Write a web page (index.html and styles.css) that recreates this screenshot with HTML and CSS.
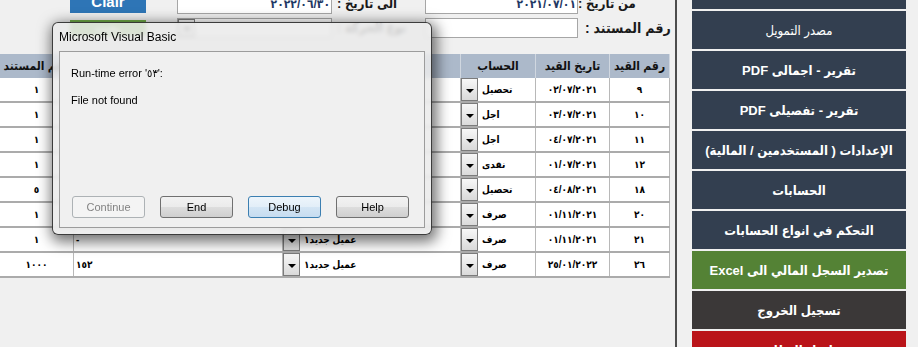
FILE: index.html
```html
<!DOCTYPE html>
<html lang="ar">
<head>
  <meta charset="UTF-8" />
  <title>السجل المالي</title>
  <link rel="stylesheet" href="styles.css">
</head>
<body>
  <div class="app">
    <main class="main">
      <div class="filters">
        <button class="btn-clear">Clair</button>
        <div class="input date field-a">٢٠٢٢/٠٦/٣٠</div>
        <div class="label label-a">الى تاريخ :</div>
        <div class="input date field-b">٢٠٢١/٠٧/٠١</div>
        <div class="label label-b">من تاريخ :</div>

        <button class="btn-search">بحث</button>
        <div class="input combo-box field-a"><span class="drop"></span></div>
        <div class="label label-a row2">نوع الحركة :</div>
        <div class="input field-b"></div>
        <div class="label label-c row2">رقم المستند :</div>
      </div>

      <div class="grid-head">
        <div class="th">رقم المستند</div>
        <div class="th">البيان</div>
        <div class="th">اسم العميل</div>
        <div class="th">الحساب</div>
        <div class="th">تاريخ القيد</div>
        <div class="th">رقم القيد</div>
      </div>
      <div id="rows"></div>

      <div class="dialog">
        <div class="dialog-title">Microsoft Visual Basic</div>
        <div class="dialog-body">
          <p class="msg">Run-time error '٥٣':</p>
          <p class="msg">File not found</p>
          <div class="dialog-buttons">
            <button class="vb-btn" disabled>Continue</button>
            <button class="vb-btn">End</button>
            <button class="vb-btn default">Debug</button>
            <button class="vb-btn">Help</button>
          </div>
        </div>
      </div>
    </main>

    <div class="divider"></div>

    <nav class="side">
      <div class="side-btn slate first">السجل المالي</div>
      <div class="side-btn slate light">مصدر التمويل</div>
      <div class="side-btn slate">تقرير - اجمالى PDF</div>
      <div class="side-btn slate">تقرير - تفصيلى PDF</div>
      <div class="side-btn slate">الإعدادات ( المستخدمين / المالية)</div>
      <div class="side-btn slate">الحسابات</div>
      <div class="side-btn slate">التحكم في انواع الحسابات</div>
      <div class="side-btn green">تصدير السجل المالي الى Excel</div>
      <div class="side-btn dark">تسجيل الخروج</div>
      <div class="side-btn red">انهاء النظام</div>
    </nav>
  </div>

  <script>
    const records = [
      ['٩', '٠٢/٠٧/٢٠٢١', 'تحصيل', '', '', '١'],
      ['١٠', '٠٣/٠٧/٢٠٢١', 'اجل', '', '', '١'],
      ['١١', '٠٤/٠٧/٢٠٢١', 'اجل', '', '', '١'],
      ['١٢', '٠١/٠٧/٢٠٢١', 'نقدى', '', '', '١'],
      ['١٨', '٠٤/٠٨/٢٠٢١', 'تحصيل', '', '', '٥'],
      ['٢٠', '٠١/١١/٢٠٢١', 'صرف', '', '', '١'],
      ['٢١', '٠١/١١/٢٠٢١', 'صرف', 'عميل جديد١', '-', '١'],
      ['٢٦', '٢٥/٠١/٢٠٢٢', 'صرف', 'عميل جديد١', '١٥٢', '١٠٠٠']
    ];

    const rows = document.getElementById('rows');
    records.forEach(function (r) {
      const row = document.createElement('div');
      row.className = 'row';
      row.innerHTML =
        '<div class="cell">' + r[5] + '</div>' +
        '<div class="cell text">' + r[4] + '</div>' +
        '<div class="cell combo"><span class="drop"></span><span class="val">' + r[3] + '</span></div>' +
        '<div class="cell combo"><span class="drop"></span><span class="val">' + r[2] + '</span></div>' +
        '<div class="cell num">' + r[1] + '</div>' +
        '<div class="cell">' + r[0] + '</div>';
      rows.appendChild(row);
    });
  </script>
</body>
</html>
```

FILE: styles.css
```css
* {
  box-sizing: border-box;
}
body {
  margin: 0;
  background-color: #f0f0f0;
  font-family: "Liberation Sans", "DejaVu Sans Condensed", "DejaVu Sans", sans-serif;
  overflow: hidden;
}
.app {
  display: flex;
  width: 918px;
  height: 347px;
  overflow: hidden;
}
.main {
  position: relative;
  width: 675px;
  flex: none;
}
.divider {
  width: 2px;
  flex: none;
  background-color: #4d4d4d;
}

/* filters */
.filters {
  display: grid;
  grid-template-columns: 70px 78px 29px 155px 93px 153px 97px;
  grid-template-rows: 24px 20px;
  row-gap: 4px;
  margin-top: -10px;
}
.btn-clear, .btn-search {
  grid-column: 2;
  width: 76px;
  border: none;
  color: white;
  font-family: "Liberation Sans", "DejaVu Sans", sans-serif;
  font-weight: bold;
  font-size: 15px;
  padding: 0;
}
.btn-clear {
  height: 23px;
  background-color: #2e75b6;
  line-height: 13px;
}
.btn-search {
  margin-top: 2px;
  height: 16px;
  background-color: #70ad47;
  font-size: 12px;
}
.input {
  background: #fff;
  border: 1px solid #a6a6a6;
}
.field-a {
  grid-column: 4;
}
.field-b {
  grid-column: 6;
}
.date {
  color: #1f3864;
  font-weight: bold;
  font-size: 12px;
  line-height: 14px;
  text-align: right;
  direction: ltr;
  padding: 6px 1px 0 0;
}
.combo-box {
  display: flex;
}
.combo-box .drop {
  height: 18px;
}
.label {
  font-weight: bold;
  font-size: 13px;
  line-height: 16px;
  color: #1a1a1a;
  direction: rtl;
  text-align: left;
  white-space: nowrap;
  padding-top: 6px;
}
.label.row2 {
  padding-top: 0;
  line-height: 20px;
}
.label-a {
  grid-column: 5;
  padding-left: 5px;
}
.label-b {
  grid-column: 7;
  padding-left: 0;
}
.label-c {
  grid-column: 7;
  padding-left: 7px;
  font-size: 14px;
}

/* datasheet */
.grid-head, .row {
  display: grid;
  grid-template-columns: 74px 209px 178px 75px 74px 60px;
  width: 670px;
}
.grid-head {
  height: 24px;
  margin-top: 16px;
  background-color: #acb9ca;
}
.th {
  border-right: 1px solid #d0d7e0;
  font-weight: bold;
  font-size: 12px;
  line-height: 24px;
  color: #111;
  text-align: center;
  direction: rtl;
  white-space: nowrap;
  overflow: hidden;
}
.row {
  height: 25px;
  background: #fff;
  border-bottom: 2px solid #ababab;
}
.cell {
  border-right: 1px solid #b8b8b8;
  font-size: 10px;
  font-weight: bold;
  line-height: 13px;
  color: #000;
  text-align: center;
  padding-top: 5px;
  white-space: nowrap;
  overflow: hidden;
}
.cell.text {
  text-align: left;
  padding-left: 2px;
}
.cell.num {
  direction: ltr;
}
.cell.combo {
  display: flex;
  padding-top: 0;
}
.drop {
  width: 17px;
  height: 23px;
  flex: none;
  border: 1px solid #7b7b7b;
  background: linear-gradient(#f7f7f7, #dadada);
  display: flex;
  align-items: center;
  justify-content: center;
}
.drop::after {
  content: "";
  border-left: 4px solid transparent;
  border-right: 4px solid transparent;
  border-top: 4px solid #000;
  margin-top: 2px;
}
.val {
  padding: 5px 0 0 4px;
  direction: rtl;
}

/* error dialog */
.dialog {
  position: absolute;
  left: 52px;
  top: 22px;
  width: 380px;
  height: 213px;
  display: flex;
  flex-direction: column;
  padding: 0 6px 6px 6px;
  border: 1px solid rgba(0, 0, 0, 0.75);
  border-radius: 6px;
  background: rgba(234, 234, 234, 0.86);
  backdrop-filter: blur(2px);
  box-shadow: 2px 4px 14px 3px rgba(0, 0, 0, 0.55);
}
.dialog-title {
  height: 28px;
  display: flex;
  align-items: center;
  font-size: 12px;
  color: #000;
}
.dialog-body {
  flex: 1;
  display: flex;
  flex-direction: column;
  background: #f0f0f0;
  border: 1px solid #9c9c9c;
  padding: 14px 11px 9px 11px;
  font-size: 11px;
}
.msg {
  margin: 0 0 13px 0;
  line-height: 14px;
}
.dialog-buttons {
  margin-top: auto;
  display: flex;
  gap: 15px;
  padding-left: 1px;
}
.vb-btn {
  width: 73px;
  height: 22px;
  padding: 0;
  border: 1px solid #707070;
  border-radius: 3px;
  background: linear-gradient(#f2f2f2 0%, #ebebeb 50%, #dddddd 51%, #cfcfcf 100%);
  font-family: "Liberation Sans", sans-serif;
  font-size: 11px;
  color: #000;
}
.vb-btn.default {
  border-color: #3c7fb1;
  background: linear-gradient(#edf5fb 0%, #e2eef8 50%, #d3e5f4 51%, #c6dcf0 100%);
}
.vb-btn:disabled {
  border-color: #adb2b5;
  background: #f4f4f4;
  color: #838383;
}

/* side menu */
.side {
  flex: 1;
  display: flex;
  flex-direction: column;
  gap: 2px;
  padding: 0 12px 0 15px;
}
.side-btn {
  height: 38px;
  flex: none;
  display: flex;
  align-items: center;
  justify-content: center;
  color: white;
  font-weight: bold;
  font-size: 13px;
  direction: rtl;
  white-space: nowrap;
}
.side-btn.first {
  margin-top: -29px;
}
.side-btn.light {
  font-weight: normal;
}
.slate {
  background-color: #333f50;
}
.green {
  background-color: #548235;
}
.dark {
  background-color: #3b3838;
}
.red {
  background-color: #ba1419;
}
```
